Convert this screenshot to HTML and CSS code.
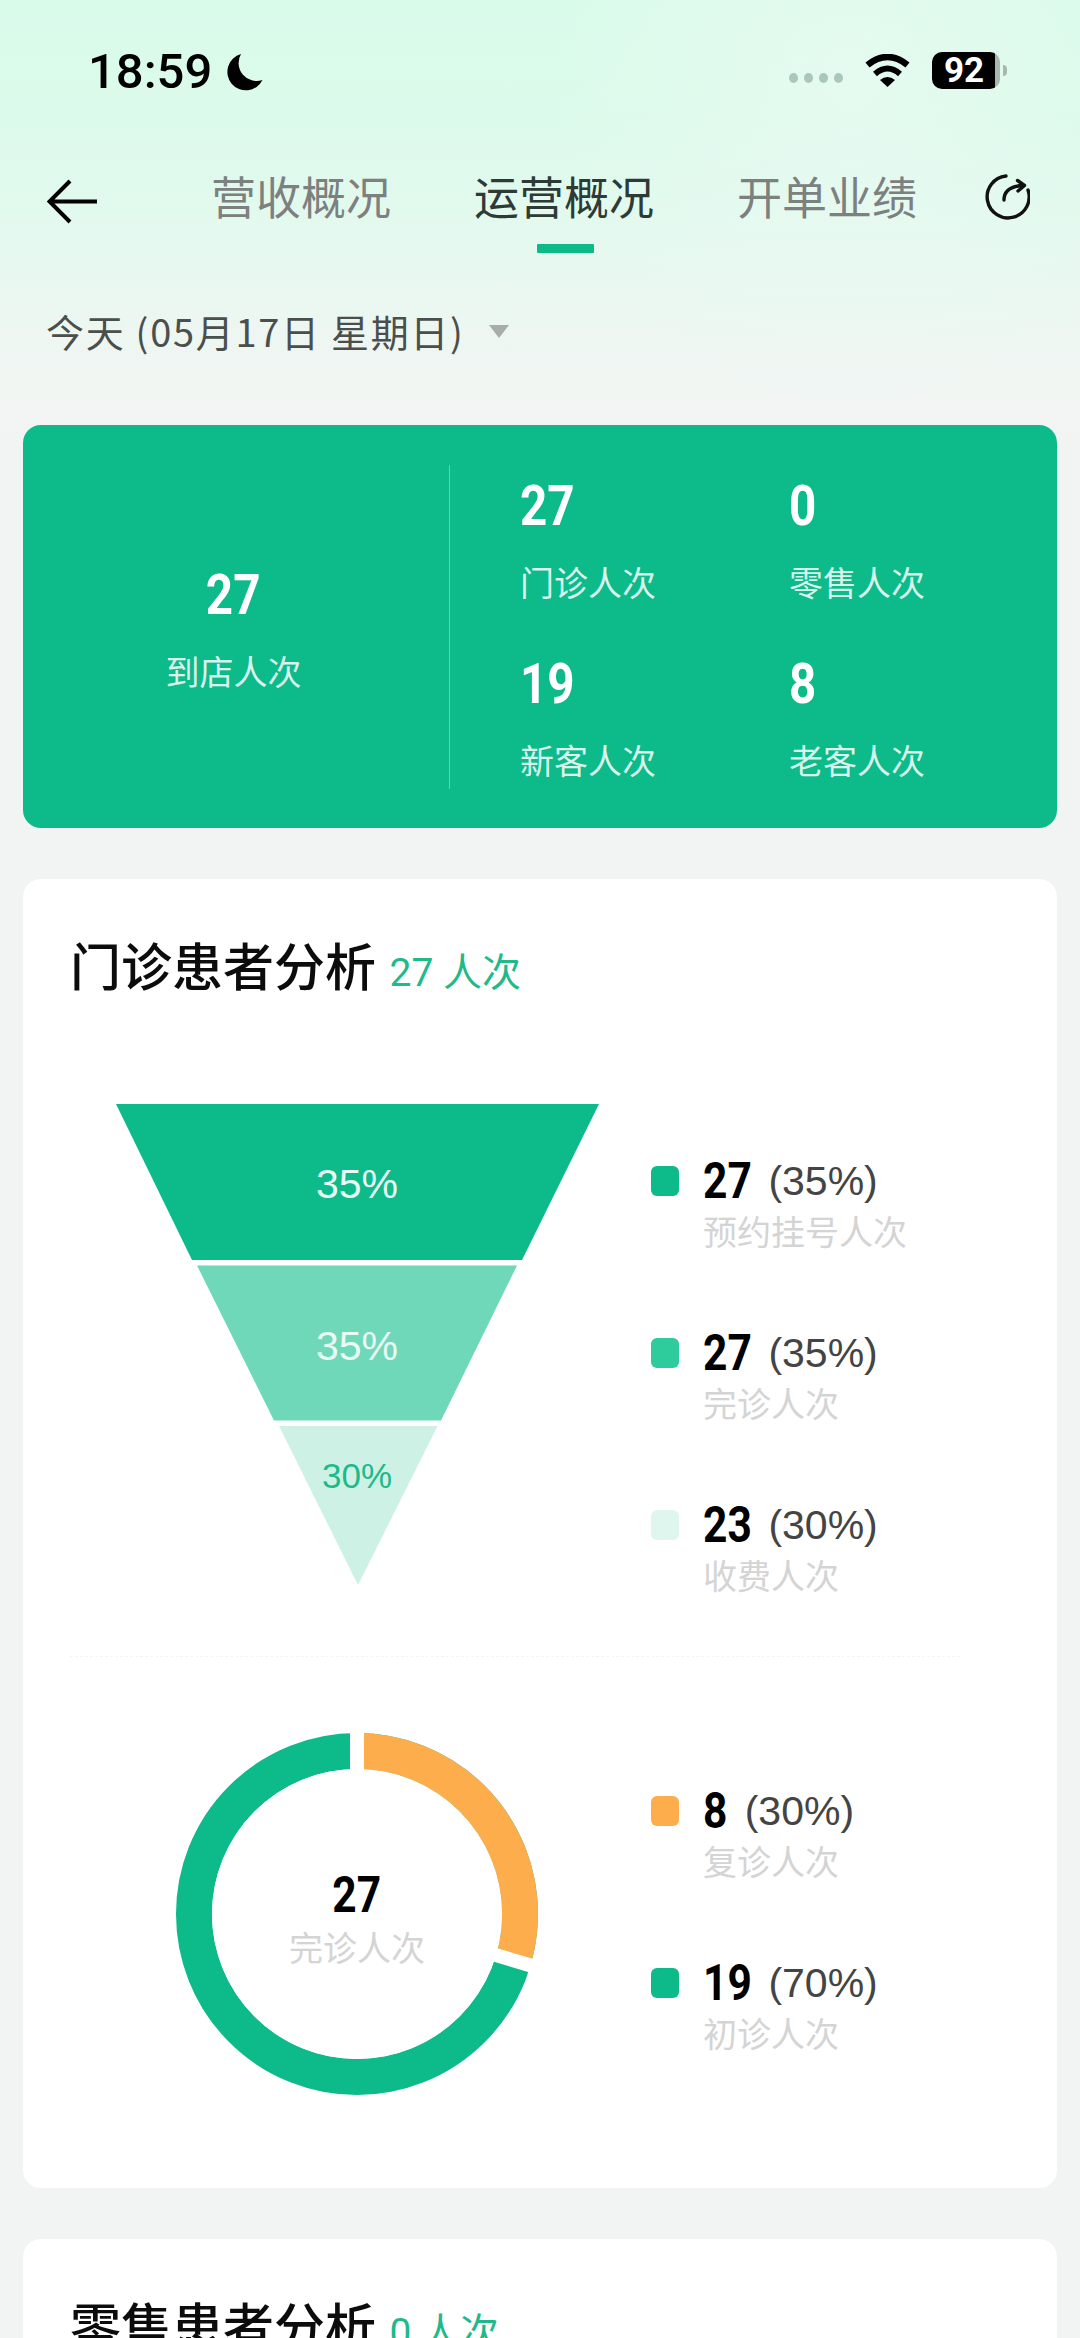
FILE: index.html
```html
<!DOCTYPE html>
<html lang="zh-CN">
<head>
    <link rel="stylesheet" href="styles.css">
    <meta charset="utf-8" />
    <meta name="viewport" content="width=device-width, initial-scale=1.0">
    <title>运营概况</title>
</head>
<body>

<div class="page">
    <!-- Status bar -->
    <div class="status-bar">
        <span class="time">18:59</span>
        <svg class="moon" width="36" height="38" viewBox="0 0 36 38">
            <path d="M14 1A18.5 18.5 0 1 0 35.500 27A18 18 0 0 1 14 1Z" fill="#000"/>
        </svg>
        <div class="signal-dots"><i></i><i></i><i></i><i></i></div>
        <svg class="wifi" width="47" height="33" viewBox="0 0 47 33">
            <path d="M3.500 11Q23.500 -5 43.500 11" fill="none" stroke="#000" stroke-width="6.500"/>
            <path d="M11 20Q23.500 9 36 20" fill="none" stroke="#000" stroke-width="6"/>
            <path d="M16 26Q23.500 20 31 26L23.500 33Z" fill="#000"/>
        </svg>
        <div class="battery">92</div>
        <div class="battery-nub"></div>
    </div>

    <!-- Tabs -->
    <div class="tabs">
        <svg class="back" width="51" height="45" viewBox="0 0 51 45">
            <path d="M50 22.500H3M23 2L2.500 22.500L23 43" fill="none" stroke="#000" stroke-width="4"/>
        </svg>
        <div class="tab-list">
            <div class="tab">营收概况</div>
            <div class="tab active">运营概况</div>
            <div class="tab">开单业绩</div>
        </div>
        <svg class="refresh" width="46" height="46" viewBox="0 0 46 46">
            <path d="M22 2A21 21 0 1 0 44 16" fill="none" stroke="#111" stroke-width="3.400" stroke-linecap="round"/>
            <path d="M20 26Q20 13 38 11.500" fill="none" stroke="#111" stroke-width="3.400" stroke-linecap="round"/>
            <path d="M33.500 6.500L40.500 11.500L34 17" fill="none" stroke="#111" stroke-width="3.400" stroke-linejoin="round" stroke-linecap="round"/>
        </svg>
    </div>

    <div class="date-row">
        <span class="date">今天 (05月17日 星期日)</span>
        <span class="date-arrow"></span>
    </div>

    <!-- Summary card -->
    <div class="hero">
        <div class="hero-left">
            <div class="hero-num">27</div>
            <div class="hero-label">到店人次</div>
        </div>
        <div class="hero-line"></div>
        <div class="hero-grid">
            <div><div class="hero-num">27</div><div class="hero-label">门诊人次</div></div>
            <div><div class="hero-num">0</div><div class="hero-label">零售人次</div></div>
            <div><div class="hero-num">19</div><div class="hero-label">新客人次</div></div>
            <div><div class="hero-num">8</div><div class="hero-label">老客人次</div></div>
        </div>
    </div>

    <!-- Outpatient analysis -->
    <div class="card">
        <div class="card-title">门诊患者分析 <span class="card-count">27 人次</span></div>

        <div class="chart-row funnel-row">
            <svg class="funnel" width="483" height="481" viewBox="0 0 483 481">
                <polygon points="0,0 483,0 406,156 76,156" fill="#0cba8a"/>
                <polygon points="81,161.500 401,161.500 325,316.500 158,316.500" fill="#6fd8b8"/>
                <polygon points="163,322 321.500,322 242,481" fill="#cdf2e5"/>
                <text class="funnel-text" x="241" y="94">35%</text>
                <text class="funnel-text" x="241" y="256">35%</text>
                <text class="funnel-text small" x="241" y="384">30%</text>
            </svg>
            <div class="legend">
                <div class="legend-item">
                    <div class="legend-head"><i class="swatch dark"></i><b>27</b><span>(35%)</span></div>
                    <div class="legend-label">预约挂号人次</div>
                </div>
                <div class="legend-item">
                    <div class="legend-head"><i class="swatch mid"></i><b>27</b><span>(35%)</span></div>
                    <div class="legend-label">完诊人次</div>
                </div>
                <div class="legend-item">
                    <div class="legend-head"><i class="swatch light"></i><b>23</b><span>(30%)</span></div>
                    <div class="legend-label">收费人次</div>
                </div>
            </div>
        </div>

        <div class="dash-line"></div>

        <div class="chart-row donut-row">
            <div class="donut">
                <svg width="362" height="362" viewBox="0 0 362 362">
                    <!-- circumference of r=163 is 1024.16 -->
                    <circle cx="181" cy="181" r="163" fill="none" stroke="#0cba8a" stroke-width="36"/>
                    <circle cx="181" cy="181" r="163" fill="none" stroke="#fdad4c" stroke-width="36"
                        stroke-dasharray="303 1024" transform="rotate(-90 181 181)"/>
                    <line x1="181" y1="181" x2="181" y2="-2" stroke="#fff" stroke-width="14"/>
                    <line x1="181" y1="181" x2="181" y2="-2" stroke="#fff" stroke-width="14" transform="rotate(106.500 181 181)"/>
                    <circle cx="181" cy="181" r="145" fill="#fff"/>
                </svg>
                <div class="donut-center">
                    <b>27</b>
                    <div class="legend-label flush">完诊人次</div>
                </div>
            </div>
            <div class="legend">
                <div class="legend-item">
                    <div class="legend-head"><i class="swatch orange"></i><b>8</b><span class="one">(30%)</span></div>
                    <div class="legend-label">复诊人次</div>
                </div>
                <div class="legend-item">
                    <div class="legend-head"><i class="swatch dark"></i><b>19</b><span>(70%)</span></div>
                    <div class="legend-label">初诊人次</div>
                </div>
            </div>
        </div>
    </div>

    <!-- Retail analysis, cut off by the screen -->
    <div class="card">
        <div class="card-title">零售患者分析 <span class="card-count">0 人次</span></div>
    </div>
</div>

</body>
</html>
```

FILE: styles.css
```css
html, body {
    margin: 0;
    padding: 0;
}

.page {
    width: 1080px;
    height: 2338px;
    overflow: hidden;
    padding: 0 23px;
    box-sizing: border-box;
    font-family: "Noto Sans CJK SC", sans-serif;
    background:
        radial-gradient(ellipse 300px 330px at 850px 80px, rgba(232, 250, 241, 0.8), rgba(232, 250, 241, 0)),
        linear-gradient(180deg, #d9fbea 0, #dcfaeb 120px, #e4f9ef 230px, #eff6f2 350px, #f2f4f3 430px);
}

/* Status bar */
.status-bar {
    display: flex;
    align-items: center;
    height: 44px;
    padding: 50px 50px 0 65px;
}

.time {
    font-family: Roboto, sans-serif;
    font-size: 49px;
    font-weight: 500;
    line-height: 44px;
    color: #000;
}

.moon {
    margin-left: 15px;
}

.signal-dots {
    display: flex;
    gap: 6px;
    margin-left: auto;
    margin-top: 12px;
}

.signal-dots i {
    width: 9px;
    height: 10px;
    border-radius: 50%;
    background: #a9c7ba;
}

.wifi {
    margin-left: 21px;
    margin-top: -3px;
}

.battery {
    width: 68px;
    height: 37px;
    margin-left: 21px;
    margin-top: -3px;
    border-radius: 10px;
    background: linear-gradient(90deg, #000 93%, #a8b8b0 93%);
    color: #fff;
    font-family: Roboto, sans-serif;
    font-size: 35px;
    font-weight: 700;
    line-height: 37px;
    text-indent: 12px;
}

.battery-nub {
    width: 4px;
    height: 11px;
    margin-left: 3px;
    margin-top: -3px;
    border-radius: 0 5px 5px 0;
    background: #a8b8b0;
}

/* Tabs */
.tabs {
    display: flex;
    align-items: flex-start;
    margin-top: 80px;
    padding-left: 24px;
}

.back {
    margin-top: 5px;
}

.tab-list {
    display: flex;
    gap: 83px;
    margin-left: 113px;
}

.tab {
    position: relative;
    width: 180px;
    height: 79px;
    margin-top: -2px;
    padding-bottom: 2px;
    font-size: 45px;
    line-height: 48px;
    color: #7c807e;
}

.tab.active {
    color: #2e3a36;
}

.tab.active::after {
    content: "";
    position: absolute;
    left: 63px;
    bottom: 0;
    width: 57px;
    height: 9px;
    border-radius: 1px;
    background: #0db986;
}

.refresh {
    margin-left: 67px;
}

/* Date selector */
.date-row {
    display: flex;
    align-items: center;
    margin-top: 54px;
    padding-left: 23px;
    height: 48px;
}

.date {
    font-size: 38px;
    line-height: 48px;
    letter-spacing: 1.700px;
    color: #4a4f4d;
}

.date-arrow {
    margin-left: 24px;
    width: 0;
    height: 0;
    border-left: 10px solid transparent;
    border-right: 10px solid transparent;
    border-top: 13px solid #a8acaa;
}

/* Summary card */
.hero {
    display: flex;
    height: 403px;
    margin-top: 70px;
    border-radius: 18px;
    background: #0cba8a;
    color: #fff;
}

.hero-left {
    display: flex;
    flex: none;
    flex-direction: column;
    align-items: center;
    justify-content: center;
    width: 421px;
    margin-right: 2px;
}

.hero-line {
    flex: none;
    width: 1px;
    height: 324px;
    margin: 40px 4px 0 3px;
    background: rgba(255, 255, 255, 0.35);
}

.hero-grid {
    display: grid;
    grid-template-columns: 269px 229px;
    row-gap: 55px;
    align-content: start;
    padding: 51px 0 0 66px;
}

/* Numbers are a narrow face in the original, Roboto squeezed comes closest */
.hero-num {
    font-family: Roboto, sans-serif;
    font-size: 56px;
    font-weight: 700;
    line-height: 60px;
    transform: scaleX(0.85);
    transform-origin: left center;
}

.hero-left .hero-num {
    transform-origin: center;
}

.hero-label {
    margin-top: 29px;
    font-size: 34px;
    line-height: 34px;
    color: rgba(255, 255, 255, 0.85);
}

/* White cards */
.card {
    margin-top: 51px;
    padding-top: 55px;
    border-radius: 18px;
    background: #fff;
}

.card-title {
    padding-left: 47px;
    font-size: 51px;
    font-weight: 500;
    line-height: 60px;
    color: #0c0c0c;
}

.card-count {
    margin-left: 2px;
    font-family: Roboto, "Noto Sans CJK SC", sans-serif;
    font-size: 39px;
    font-weight: 400;
    color: #1fb98a;
}

.chart-row {
    display: flex;
    align-items: flex-start;
}

.funnel-row {
    margin-top: 101px;
    padding-left: 93px;
}

.funnel {
    display: block;
    flex: none;
}

.funnel-text {
    font-family: "Liberation Sans", sans-serif;
    font-size: 41px;
    text-anchor: middle;
    fill: #eafaf4;
}

.funnel-text.small {
    font-size: 35px;
    fill: #1fb98a;
}

.funnel-row .legend {
    margin-left: 52px;
    padding-top: 52px;
}

.dash-line {
    margin: 64px 97px 0 47px;
    border-top: 1px dashed #f5f5f5;
}

.donut-row {
    margin-top: 76px;
    padding: 0 0 93px 153px;
}

.donut {
    position: relative;
    width: 362px;
    height: 362px;
    flex: none;
}

.donut svg {
    display: block;
}

.donut-center {
    position: absolute;
    top: 5px;
    left: 0;
    right: 0;
    bottom: 0;
    display: flex;
    flex-direction: column;
    align-items: center;
    justify-content: center;
}

.donut-center b,
.legend-head b {
    font-family: Roboto, sans-serif;
    font-size: 50px;
    font-weight: 700;
    line-height: 50px;
    color: #000;
    transform: scaleX(0.85);
    transform-origin: left center;
}

.donut-center b {
    transform-origin: center;
}

.donut-row .legend {
    margin-left: 113px;
    padding-top: 53px;
}

/* Legend */
.legend {
    display: flex;
    flex-direction: column;
    gap: 80px;
}

.legend-head {
    display: flex;
    align-items: center;
    height: 50px;
}

.legend-head span {
    margin-left: 8px;
    font-family: "Liberation Sans", sans-serif;
    font-size: 41px;
    color: #444;
}

.legend-head span.one {
    margin-left: 13px;
}

.swatch {
    width: 28px;
    height: 30px;
    margin-right: 24px;
    border-radius: 6px;
}

.swatch.dark { background: #0cba8a; }
.swatch.mid { background: #2ecb9c; }
.swatch.light { background: #dff6ee; }
.swatch.orange { background: #fdad4c; }

.legend-label {
    margin-top: 8px;
    padding-left: 52px;
    font-size: 34px;
    line-height: 34px;
    color: #d4d4d4;
}

.legend-label.flush {
    margin-top: 10px;
    padding-left: 0;
}
```
